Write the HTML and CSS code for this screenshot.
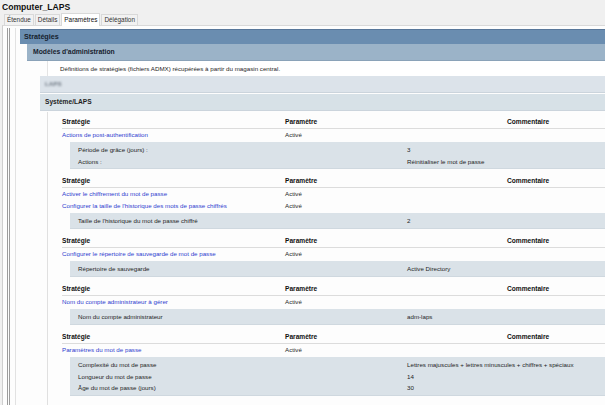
FILE: index.html
```html
<!DOCTYPE html>
<html>
<head>
    <meta charset="utf-8">
    <link rel="stylesheet" href="styles.css">
</head>
<body>

<div class="title">Computer_LAPS</div>
<div class="tabs">
    <span class="tab">Étendue</span>
    <span class="tab">Détails</span>
    <span class="tab active">Paramètres</span>
    <span class="tab">Délégation</span>
</div>

<div class="panel">
    <div class="frame">
        <div class="report">
            <div class="h1">Stratégies</div>
            <div class="lvl1">
                <div class="h2">Modèles d'administration</div>
                <div class="lvl2">
                    <div class="note">Définitions de stratégies (fichiers ADMX) récupérées à partir du magasin central.</div>
                    <div class="h3"><span class="hidden">LAPS</span></div>
                    <div class="h3 strong">Système/LAPS</div>

                    <div class="body">
                        <div class="sect">
                            <div class="row head"><span>Stratégie</span><span>Paramètre</span><span>Commentaire</span></div>
                            <div class="row"><span class="link">Actions de post-authentification</span><span>Activé</span><span></span></div>
                            <div class="detail">
                                <div class="row"><span>Période de grâce (jours) :</span><span>3</span></div>
                                <div class="row"><span>Actions :</span><span>Réinitialiser le mot de passe</span></div>
                            </div>
                        </div>

                        <div class="sect">
                            <div class="row head"><span>Stratégie</span><span>Paramètre</span><span>Commentaire</span></div>
                            <div class="row"><span class="link">Activer le chiffrement du mot de passe</span><span>Activé</span><span></span></div>
                            <div class="row"><span class="link">Configurer la taille de l'historique des mots de passe chiffrés</span><span>Activé</span><span></span></div>
                            <div class="detail">
                                <div class="row"><span>Taille de l'historique du mot de passe chiffré</span><span>2</span></div>
                            </div>
                        </div>

                        <div class="sect">
                            <div class="row head"><span>Stratégie</span><span>Paramètre</span><span>Commentaire</span></div>
                            <div class="row"><span class="link">Configurer le répertoire de sauvegarde de mot de passe</span><span>Activé</span><span></span></div>
                            <div class="detail">
                                <div class="row"><span>Répertoire de sauvegarde</span><span>Active Directory</span></div>
                            </div>
                        </div>

                        <div class="sect">
                            <div class="row head"><span>Stratégie</span><span>Paramètre</span><span>Commentaire</span></div>
                            <div class="row"><span class="link">Nom du compte administrateur à gérer</span><span>Activé</span><span></span></div>
                            <div class="detail">
                                <div class="row"><span>Nom du compte administrateur</span><span>adm-laps</span></div>
                            </div>
                        </div>

                        <div class="sect">
                            <div class="row head"><span>Stratégie</span><span>Paramètre</span><span>Commentaire</span></div>
                            <div class="row"><span class="link">Paramètres du mot de passe</span><span>Activé</span><span></span></div>
                            <div class="detail">
                                <div class="row"><span>Complexité du mot de passe</span><span>Lettres majuscules + lettres minuscules + chiffres + spéciaux</span></div>
                                <div class="row"><span>Longueur du mot de passe</span><span>14</span></div>
                                <div class="row"><span>Âge du mot de passe (jours)</span><span>30</span></div>
                            </div>
                        </div>
                    </div>
                </div>
            </div>
        </div>
    </div>
</div>

</body>
</html>
```

FILE: styles.css
```css
* {
    box-sizing: border-box;
}

body {
    margin: 0;
    width: 605px;
    height: 405px;
    overflow: hidden;
    background-color: #f0f0f0;
    font-family: "Liberation Sans", Arial, sans-serif;
    font-size: 6.2px;
    color: #1e1e1e;
}

.title {
    font-weight: bold;
    font-size: 8.6px;
    height: 13px;
    line-height: 11px;
    padding: 2px 0 0 2px;
    color: #111;
}

/* tab strip */
.tabs {
    display: flex;
    height: 12px;
    padding-left: 4px;
    align-items: flex-end;
}
.tab {
    height: 11px;
    line-height: 10px;
    padding: 0 2px;
    margin-right: 1px;
    font-size: 6.4px;
    color: #333;
    border: 1px solid #d9d9d9;
    border-bottom: none;
    background-color: #f2f2f2;
}
.tab.active {
    height: 13px;
    line-height: 12px;
    margin-bottom: -1px;
    background-color: #fff;
    color: #111;
}

/* white settings panel */
.panel {
    display: flex;
    height: 380px;
    margin-left: 2px;
    padding: 2px 0 0 4px;
    background-color: #fdfdfd;
    border-top: 1px solid #d9d9d9;
    border-left: 1px solid #cfcfcf;
}
.frame {
    flex: 1;
    display: flex;
    padding-left: 5px;
    border-left: 3px double #9c9c9c;
}
.report {
    flex: 1;
    padding: 1px 0 0 4px;
    border-left: 1px solid #e2e2e2;
}

.h1 {
    height: 15px;
    line-height: 14px;
    padding-left: 4px;
    font-weight: bold;
    font-size: 7.2px;
    color: #15212d;
    background-color: #6a8db0;
    border-top: 1px solid #58779a;
}
.lvl1 {
    margin-left: 7px;
}
.h2 {
    height: 17px;
    line-height: 16px;
    padding-left: 6px;
    font-weight: bold;
    font-size: 6.8px;
    color: #17222e;
    background-color: #9bb3c8;
    border-bottom: 1px solid #8aa2b8;
}
.lvl2 {
    margin-left: 13px;
}
.note {
    height: 15px;
    line-height: 15px;
    margin-left: 7px;
    padding-left: 12px;
    border-left: 1px solid #e4e4e4;
    background-color: #fff;
}
.h3 {
    height: 17px;
    line-height: 16px;
    padding-left: 5px;
    margin-bottom: 1px;
    background-color: #dce3ea;
    border-bottom: 1px solid #cbd4dc;
}
.h3.strong {
    font-weight: bold;
    font-size: 6.6px;
    background-color: #d7e1e7;
}
.hidden {
    display: inline-block;
    color: #6c7680;
    font-weight: bold;
    filter: blur(0.9px);
}

.body {
    margin-left: 7px;
    padding: 4px 0 0 14px;
    height: 300px;
    border-left: 1px solid #e0e0e0;
    background-color: #fdfdfd;
}

/* one policy table: header, policy rows, detail box */
.sect {
    margin-bottom: 6.4px;
}
.row {
    display: grid;
    grid-template-columns: 223px 222px 1fr;
    height: 12px;
    line-height: 12px;
    white-space: nowrap;
}
.head {
    height: 13px;
    line-height: 12px;
    font-weight: bold;
    font-size: 6.6px;
    color: #111;
    border-bottom: 1px solid #dcdcdc;
}
.link {
    color: #2e3ccf;
}
.detail {
    margin: 1px 0 0 8px;
    padding: 2px 0 1px 8px;
    background-color: #dae2e8;
    border-bottom: 1px solid #cfd8df;
}
.detail .row {
    grid-template-columns: 329px 1fr;
    height: 11.5px;
    line-height: 11.5px;
}
```
